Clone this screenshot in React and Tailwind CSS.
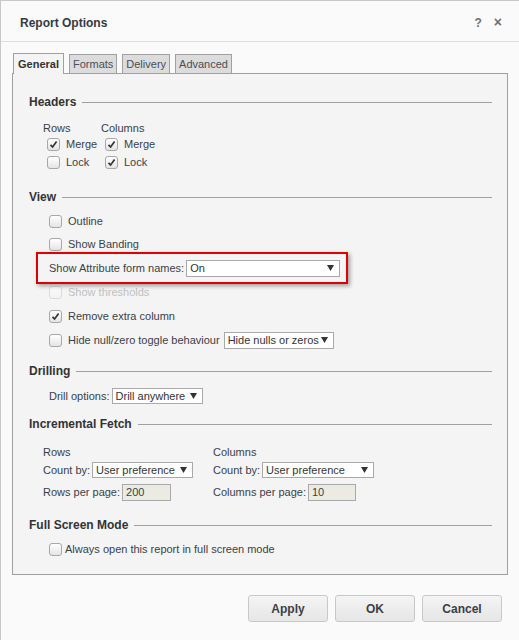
import React from "react";

const font = { fontFamily: '"Liberation Sans", Arial, sans-serif' };

const Check = ({ checked, disabled }) => (
  <span
    className={`inline-flex w-[13px] h-[13px] shrink-0 items-center justify-center rounded-[3px] border bg-gradient-to-b ${
      disabled
        ? "border-[#dcdcdc] from-[#fafafa] to-[#f2f2f2]"
        : "border-[#a8a8a8] from-[#ffffff] to-[#e4e4e4]"
    }`}
  >
    {checked && (
      <svg width="9" height="9" viewBox="0 0 9 9">
        <path d="M1.5 4.8 L3.6 7 L7.6 1.6" fill="none" stroke="#333" strokeWidth="1.7" />
      </svg>
    )}
  </span>
);

const Arrow = () => (
  <svg width="7" height="6" viewBox="0 0 7 6" className="shrink-0">
    <polygon points="0,0 7,0 3.5,6" fill="#333" />
  </svg>
);

const Select = ({ value, w, h = "h-[16px]" }) => (
  <div
    className={`${w} ${h} flex items-center justify-between border border-[#a9a9a9] bg-white pl-[3px] pr-[5px] text-[11px] text-[#333]`}
  >
    <span className="leading-none pt-[1px]">{value}</span>
    <Arrow />
  </div>
);

const Section = ({ title, mt }) => (
  <div className={`flex items-center h-[16px] ${mt}`}>
    <span className="text-[12px] font-bold text-[#333]">{title}</span>
    <div className="flex-1 h-px bg-[#a0a0a0] ml-[6px]" />
  </div>
);

const CheckRow = ({ label, checked, disabled, h }) => (
  <div className={`flex items-center ${h} pl-[20px]`}>
    <Check checked={checked} disabled={disabled} />
    <span className={`ml-[6px] text-[11px] ${disabled ? "text-[#c0c0c0]" : "text-[#3a3f47]"}`}>
      {label}
    </span>
  </div>
);

export default function App() {
  return (
    <div
      style={font}
      className="w-[519px] h-[640px] bg-[#fafafa] border-t border-l border-[#c8c8c8] overflow-hidden"
    >
      {/* title bar */}
      <div className="h-[41px] flex items-center justify-between pt-[3px] pl-[19px] pr-[17px] border-b border-[#dedede]">
        <span className="text-[12px] font-bold text-[#333a45]">Report Options</span>
        <div className="flex items-center gap-[12px] text-[12px] font-bold text-[#707070]">
          <span>?</span>
          <span className="text-[14px]">×</span>
        </div>
      </div>

      <div className="ml-[11px] mt-[11px] w-[496px]">
        {/* tabs */}
        <div className="flex items-end gap-[5px] pl-px">
          <div className="relative z-10 -mb-px h-[21px] px-[4px] flex items-center border border-b-0 border-[#a0a0a0] bg-[#f4f4f4] text-[11px] font-bold text-[#333]">
            General
          </div>
          {["Formats", "Delivery", "Advanced"].map((t) => (
            <div
              key={t}
              className="h-[19px] px-[3px] flex items-center border border-b-0 border-[#a0a0a0] bg-[#dcdcdc] text-[11px] text-[#4a4f57]"
            >
              {t}
            </div>
          ))}
        </div>

        {/* panel */}
        <div className="h-[502px] border border-[#a0a0a0] bg-[#f4f4f4] pl-[16px] pr-[15px]">
          <Section title="Headers" mt="mt-[20px]" />
          <div className="pl-[14px] text-[11px] text-[#3a3f47]">
            <div className="flex mt-[11px] h-[14px] items-center">
              <span className="w-[58px]">Rows</span>
              <span>Columns</span>
            </div>
            <div className="flex h-[18px] items-center">
              <div className="w-[58px] flex items-center pl-[4px]">
                <Check checked />
                <span className="ml-[6px]">Merge</span>
              </div>
              <div className="flex items-center pl-[4px]">
                <Check checked />
                <span className="ml-[6px]">Merge</span>
              </div>
            </div>
            <div className="flex h-[19px] items-center">
              <div className="w-[58px] flex items-center pl-[4px]">
                <Check />
                <span className="ml-[6px]">Lock</span>
              </div>
              <div className="flex items-center pl-[4px]">
                <Check checked />
                <span className="ml-[6px]">Lock</span>
              </div>
            </div>
          </div>

          <Section title="View" mt="mt-[17px]" />
          <div className="mt-[5px]">
            <CheckRow label="Outline" h="h-[23px]" />
            <CheckRow label="Show Banding" h="h-[23px]" />
            <div className="relative flex items-center h-[24px] pl-[20px]">
              <div className="absolute left-[7px] top-[-4px] w-[312px] h-[32px] border-2 border-[#e00000] shadow-[2px_2px_4px_rgba(0,0,0,0.35)]" />
              <span className="text-[11px] text-[#3a3f47] mr-[2px]">Show Attribute form names:</span>
              <Select value="On" w="w-[154px]" h="h-[17px]" />
            </div>
            <CheckRow label="Show thresholds" disabled h="h-[24px]" />
            <CheckRow label="Remove extra column" checked h="h-[24px]" />
            <div className="flex items-center h-[24px] pl-[20px]">
              <Check />
              <span className="ml-[6px] mr-[4px] text-[11px] text-[#3a3f47]">
                Hide null/zero toggle behaviour
              </span>
              <Select value="Hide nulls or zeros" w="w-[110px]" h="h-[17px]" />
            </div>
          </div>

          <Section title="Drilling" mt="mt-[11px]" />
          <div className="mt-[8px] h-[18px] flex items-center pl-[20px]">
            <span className="text-[11px] text-[#3a3f47] mr-[2px]">Drill options:</span>
            <Select value="Drill anywhere" w="w-[91px]" />
          </div>

          <Section title="Incremental Fetch" mt="mt-[11px]" />
          <div className="pl-[14px] text-[11px] text-[#3a3f47]">
            <div className="flex mt-[13px] h-[14px] items-center">
              <span className="w-[170px]">Rows</span>
              <span>Columns</span>
            </div>
            <div className="flex mt-[2px] h-[18px] items-center">
              <div className="w-[170px] flex items-center">
                <span className="mr-[2px]">Count by:</span>
                <Select value="User preference" w="w-[101px]" />
              </div>
              <div className="flex items-center">
                <span className="mr-[2px]">Count by:</span>
                <Select value="User preference" w="w-[112px]" />
              </div>
            </div>
            <div className="flex mt-[4px] h-[18px] items-center">
              <div className="w-[170px] flex items-center">
                <span className="mr-[2px]">Rows per page:</span>
                <div className="w-[49px] h-[17px] border border-[#a9a9a9] bg-[#ebebe4] pl-[3px] pt-[2px] leading-none">
                  200
                </div>
              </div>
              <div className="flex items-center">
                <span className="mr-[2px]">Columns per page:</span>
                <div className="w-[48px] h-[17px] border border-[#a9a9a9] bg-[#ebebe4] pl-[3px] pt-[2px] leading-none">
                  10
                </div>
              </div>
            </div>
          </div>

          <Section title="Full Screen Mode" mt="mt-[16px]" />
          <div className="mt-[7px] h-[18px] flex items-center pl-[20px]">
            <Check />
            <span className="ml-[3px] text-[11px] text-[#3a3f47]">
              Always open this report in full screen mode
            </span>
          </div>
        </div>
      </div>

      {/* buttons */}
      <div className="mt-[20px] flex justify-end gap-[7px] pr-[17px]">
        {["Apply", "OK", "Cancel"].map((b) => (
          <button
            key={b}
            className="w-[80px] h-[27px] rounded-[3px] border border-[#c8c8c8] bg-gradient-to-b from-[#f4f4f4] to-[#e6e6e6] text-[12px] font-bold text-[#3a3f47]"
          >
            {b}
          </button>
        ))}
      </div>
    </div>
  );
}
